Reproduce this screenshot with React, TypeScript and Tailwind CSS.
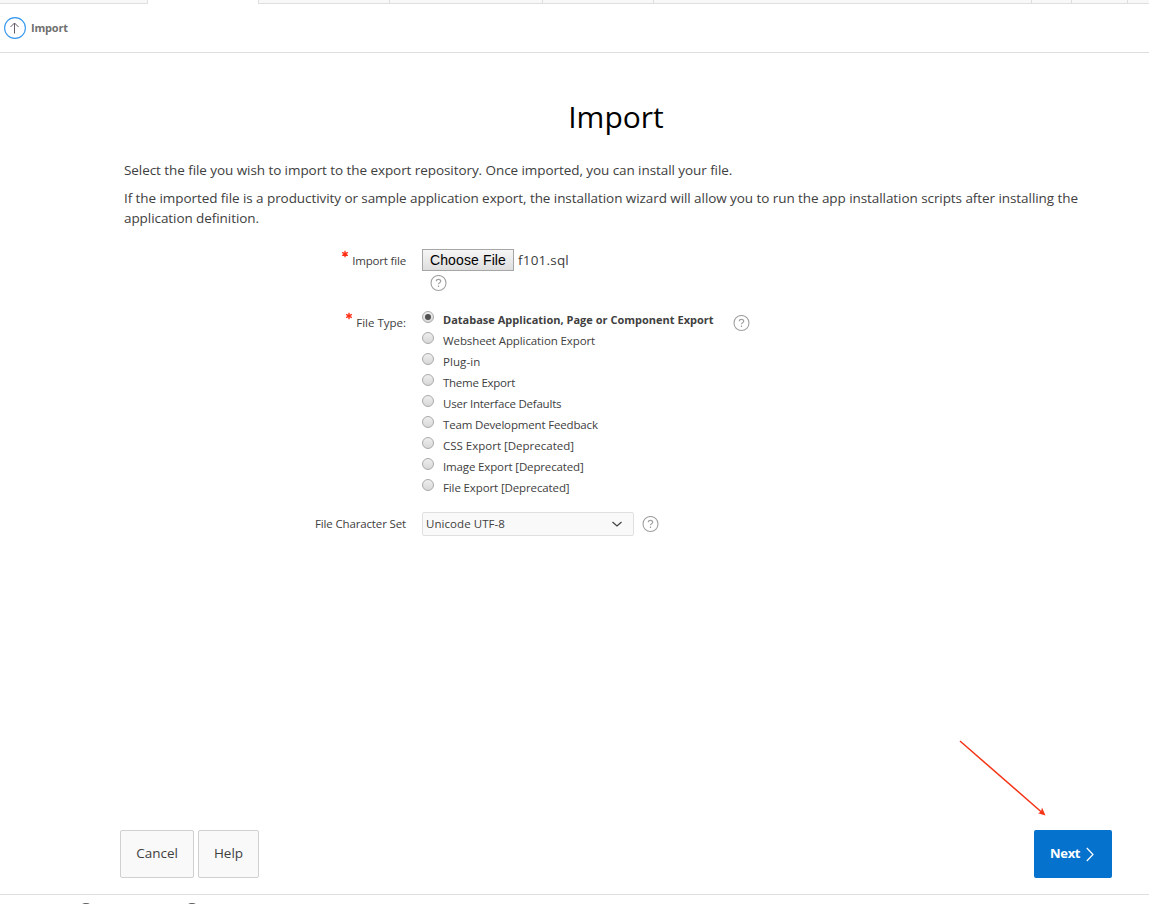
import type { ReactNode } from "react";

const exportTypes = [
  { label: "Database Application, Page or Component Export", spacing: "text-[11px] font-bold tracking-[0.01px]" },
  { label: "Websheet Application Export", spacing: "tracking-[-0.1px]" },
  { label: "Plug-in", spacing: "tracking-[0.08px]" },
  { label: "Theme Export", spacing: "tracking-[-0.26px]" },
  { label: "User Interface Defaults", spacing: "tracking-[-0.22px]" },
  { label: "Team Development Feedback", spacing: "tracking-[-0.16px]" },
  { label: "CSS Export [Deprecated]", spacing: "tracking-normal" },
  { label: "Image Export [Deprecated]", spacing: "tracking-[-0.14px]" },
  { label: "File Export [Deprecated]", spacing: "tracking-[-0.12px]" },
];

function HelpIcon({ className = "" }: { className?: string }) {
  return (
    <svg className={`h-[17px] w-[17px] shrink-0 ${className}`} viewBox="0 0 17 17" fill="none" stroke="#a0a0a0">
      <circle cx="8.5" cy="8" r="7.5" strokeWidth="1.1" />
      <path d="M6.3 6.3C6.3 5 7.2 4.3 8.5 4.3s2.2.8 2.2 1.9c0 1.4-2.2 1.5-2.2 3.1M8.5 10.6V12" strokeWidth="1.2" />
    </svg>
  );
}

function Label({ children, required = false, spacing }: { children: ReactNode; required?: boolean; spacing: string }) {
  return (
    <div className="flex w-[286px] shrink-0 justify-end text-[11.5px] leading-4">
      {required && (
        <svg className="mr-[3px] -mt-[3px] h-2 w-2" viewBox="0 0 8 8" stroke="#ff2d12" strokeWidth="1.3">
          <path d="M4 .8v6.4M1.2 2.4l5.6 3.2M6.8 2.4 1.2 5.6" />
        </svg>
      )}
      <span className={spacing}>{children}</span>
    </div>
  );
}

function Tabs() {
  return (
    <div className="flex h-1 shrink-0">
      <div className="w-[148px] border-r border-b border-[#dfdfdf] bg-[#f8f8f8]" />
      <div className="w-[110px]" />
      <div className="w-[132px] border-x border-b border-[#dfdfdf] bg-[#f8f8f8]" />
      <div className="w-[153px] border-r border-b border-[#dfdfdf] bg-[#f8f8f8]" />
      <div className="w-[111px] border-r border-b border-[#dfdfdf] bg-[#f8f8f8]" />
      <div className="w-[378px] border-r border-b border-[#dfdfdf] bg-[#f8f8f8]" />
      <div className="w-[40px] border-r border-b border-[#dfdfdf] bg-[#f8f8f8]" />
      <div className="w-[56px] border-r border-b border-[#dfdfdf] bg-[#f8f8f8]" />
      <div className="flex-1 border-b border-[#dfdfdf] bg-[#f8f8f8]" />
    </div>
  );
}

export default function App() {
  return (
    <div className="relative flex h-[904px] w-full flex-col overflow-hidden bg-white font-['Open_Sans',sans-serif] text-[#404040]">
      <Tabs />
      <header className="flex h-[49px] shrink-0 items-center border-b border-[#dfdfdf] pl-1">
        <svg className="h-[22px] w-[22px]" viewBox="0 0 22 22" fill="none">
          <circle cx="11" cy="11" r="10.4" stroke="#3497ed" strokeWidth="1.1" />
          <path d="M10.5 16.5V6M6.5 10l4-4 4 4" stroke="#665b68" />
        </svg>
        <span className="ml-[5px] text-[11px] leading-4 font-bold tracking-[-0.2px] text-[#707070]">Import</span>
      </header>

      <main className="flex flex-1 flex-col pr-[37px] pl-[120px]">
        <h1 className="mt-[44px] text-center text-[30px] leading-10 text-black">Import</h1>
        <div className="mt-[23px] pl-1 text-[13.5px] leading-5 tracking-[-0.07px] whitespace-nowrap">
          <p>Select the file you wish to import to the export repository. Once imported, you can install your file.</p>
          <p className="mt-2">
            If the imported file is a productivity or sample application export, the installation wizard will allow you to run the app installation scripts after installing the
            <br />
            application definition.
          </p>
        </div>

        <div className="mt-[21px] flex">
          <div className="pt-1"><Label required spacing="tracking-[-0.18px]">Import file</Label></div>
          <div className="ml-4">
            <div className="flex h-[22px] items-center">
              <button className="h-[22px] w-[92px] border border-[#a6a6a6] bg-linear-to-b from-[#f6f6f6] to-[#dedede] font-['Liberation_Sans',sans-serif] text-sm leading-5 tracking-[0.12px] whitespace-nowrap text-black">Choose File</button>
              <span className="ml-1 text-[13.5px] leading-5 tracking-[0.2px]">f101.sql</span>
            </div>
            <HelpIcon className="mt-1 ml-2" />
          </div>
        </div>

        <div className="mt-[19px] flex">
          <div className="pt-1"><Label required spacing="tracking-normal">File Type:</Label></div>
          <div className="ml-4">
            {exportTypes.map((type, index) => (
              <label key={type.label} className="flex h-[21px] text-[11.5px] leading-4">
                <span className="mr-[9px] flex h-3 w-3 shrink-0 items-center justify-center rounded-full border border-[#aaa] bg-linear-to-b from-[#eee] to-[#d8d8d8]">
                  {index === 0 && <span className="h-1.5 w-1.5 rounded-full bg-[#505050]" />}
                </span>
                <span className={`mt-px whitespace-nowrap ${type.spacing}`}>{type.label}</span>
              </label>
            ))}
          </div>
          <HelpIcon className="mt-1 ml-[19px]" />
        </div>

        <div className="mt-[12px] flex items-center">
          <Label spacing="tracking-[-0.14px]">File Character Set</Label>
          <button className="ml-4 flex h-6 w-[212px] items-center justify-between rounded-[2px] border border-[#dfdfdf] bg-[#f9f9f9] pr-[10px] pl-[3px] text-[11.5px] leading-4 tracking-[0.06px]">
            Unicode UTF-8
            <svg className="h-3 w-3" viewBox="0 0 12 12" fill="none" stroke="#404040" strokeWidth="1.2"><path d="m1.5 4 4.5 4 4.5-4" /></svg>
          </button>
          <HelpIcon className="ml-2" />
        </div>

        <div className="mt-auto mb-4 flex h-12 gap-1 text-[13.5px] leading-5">
          <button className="w-[74px] rounded-[2px] border border-[#d0d0d0] bg-[#f9f9f9] pb-[3px]">Cancel</button>
          <button className="w-[61px] rounded-[2px] border border-[#d0d0d0] bg-[#f9f9f9] pb-[3px]">Help</button>
          <button className="ml-auto flex w-[78px] items-center rounded-[2px] bg-[#0572ce] pl-4 text-[13px] font-bold tracking-[-0.3px] text-white">
            <span className="w-[30px] pb-[3px] whitespace-nowrap">Next</span>
            <svg className="ml-1.5 h-4 w-2" viewBox="0 0 8 16" fill="none" stroke="white" strokeWidth="1.2"><path d="m.8 2 6.2 6.5L.8 15" /></svg>
          </button>
        </div>
      </main>

      <footer className="flex h-[10px] shrink-0 overflow-hidden border-t border-[#dfdfdf] pt-2 pl-[79px]">
        <svg className="h-3.5 w-3.5 shrink-0" viewBox="0 0 14 14" fill="none" stroke="#666" strokeWidth="1.3"><circle cx="7" cy="7" r="6.4" /></svg>
        <svg className="ml-[92px] h-3.5 w-3.5 shrink-0" viewBox="0 0 14 14" fill="none" stroke="#666" strokeWidth="1.3"><circle cx="7" cy="7" r="6.4" /></svg>
      </footer>

      <svg className="pointer-events-none absolute top-[738px] left-[957px] h-20 w-[92px]" viewBox="0 0 92 80" fill="none">
        <path d="M3 3 85 74.5" stroke="#f33416" strokeWidth="1.5" />
        <path d="m88.5 77.5-7.5-2.2 3-1.5 1-4.3Z" fill="#f33416" />
      </svg>
    </div>
  );
}
